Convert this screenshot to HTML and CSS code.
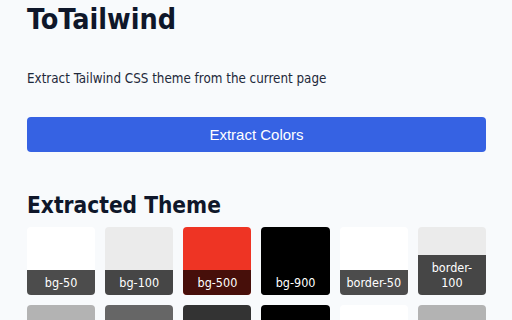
FILE: index.html
```html
<!DOCTYPE html>
<html lang="en">
<head>
<meta charset="utf-8">
<title>ToTailwind</title>
<link rel="stylesheet" href="styles.css">
</head>
<body>
  <main class="popup">
    <h1 class="title">ToTailwind</h1>
    <p class="intro">Extract Tailwind CSS theme from the current page</p>
    <button class="extract-btn" type="button">Extract Colors</button>
    <h2 class="section-title">Extracted Theme</h2>
    <div class="swatches">
      <div class="swatch" style="background:#ffffff"><span class="swatch-label">bg-50</span></div>
      <div class="swatch" style="background:#ebebeb"><span class="swatch-label">bg-100</span></div>
      <div class="swatch" style="background:#ee3424"><span class="swatch-label">bg-500</span></div>
      <div class="swatch" style="background:#000000"><span class="swatch-label">bg-900</span></div>
      <div class="swatch" style="background:#ffffff"><span class="swatch-label">border-50</span></div>
      <div class="swatch" style="background:#ebebeb"><span class="swatch-label">border-100</span></div>
      <div class="swatch" style="background:#b3b3b3"></div>
      <div class="swatch" style="background:#666666"></div>
      <div class="swatch" style="background:#333333"></div>
      <div class="swatch" style="background:#000000"></div>
      <div class="swatch" style="background:#ffffff"></div>
      <div class="swatch" style="background:#b3b3b3"></div>
    </div>
  </main>
</body>
</html>
```
FILE: styles.css
```css
html, body {
  margin: 0;
  padding: 0;
  background: #f8fafc;
}

.popup {
  padding: 3px 26px 0 27px;
  font-family: "DejaVu Sans Condensed", "DejaVu Sans", sans-serif;
  font-stretch: condensed;
  color: #1e293b;
}

.title {
  margin: 0;
  font-size: 28.5px;
  line-height: 33px;
  font-weight: bold;
  color: #0f172a;
}

.intro {
  margin: 34px 0 0;
  font-size: 13.3px;
  line-height: 18px;
  color: #1e293b;
}

.extract-btn {
  display: block;
  width: 100%;
  height: 35px;
  margin: 29px 0 0;
  padding: 0;
  border: 0;
  border-radius: 4px;
  background: #3662e3;
  color: #ffffff;
  font-family: "Liberation Sans", Arial, sans-serif;
  font-size: 15px;
  line-height: 35px;
  text-align: center;
}

.section-title {
  margin: 40px 0 0;
  font-size: 22.5px;
  line-height: 26px;
  font-weight: bold;
  color: #0f172a;
}

.swatches {
  display: grid;
  grid-template-columns: repeat(6, 1fr);
  gap: 10px;
  margin-top: 9px;
}

.swatch {
  aspect-ratio: 1 / 1;
  border-radius: 4px;
  overflow: hidden;
  display: flex;
  flex-direction: column;
  justify-content: flex-end;
}

.swatch-label {
  display: block;
  padding: 5px 4px;
  background: rgba(0, 0, 0, 0.7);
  color: #ffffff;
  font-size: 12.5px;
  line-height: 15px;
  text-align: center;
}
```
